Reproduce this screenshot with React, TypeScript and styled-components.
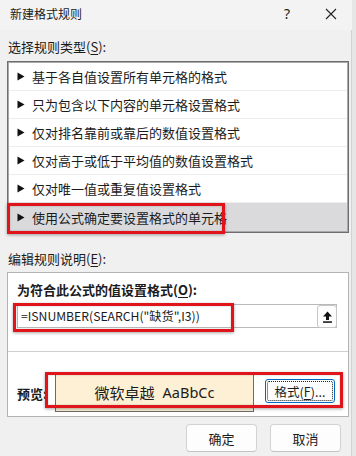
import React from "react";
import styled, { createGlobalStyle } from "styled-components";

const Global = createGlobalStyle`
  html, body { margin: 0; padding: 0; background: #f0f0f0; }
  body { font-family: "Noto Sans CJK SC", "Noto Sans", sans-serif; color: #1b1b1b; }
  * { box-sizing: border-box; }
`;

const Window = styled.div`
  width: 356px;
  height: 456px;
  background: #f0f0f0;
  overflow: hidden;
  display: flex;
  flex-direction: column;
  border-right: 4px solid #e6e6e6;
  box-shadow: inset -1px 0 0 #d2d2d2;
`;

const TitleBar = styled.div`
  height: 30px;
  flex: none;
  display: flex;
  align-items: center;
  padding-left: 10px;
  background: #f3f3f3;
`;

const Title = styled.div`
  font-size: 12px;
  line-height: 16px;
  flex: 1;
  margin-top: -3px;
`;

const TitleButton = styled.div<{ $w: number }>`
  width: ${(p) => p.$w}px;
  height: 30px;
  display: flex;
  align-items: center;
  justify-content: center;
  font-family: "Noto Sans", sans-serif;
  font-size: 14px;
  margin-top: -3px;
`;

const Body = styled.div`
  flex: 1;
  display: flex;
  flex-direction: column;
  padding: 8px 3px 0 7px;
`;

const Label = styled.div<{ $mt?: number }>`
  font-size: 13px;
  line-height: 18px;
  height: 18px;
  padding-left: 1px;
  margin-top: ${(p) => p.$mt ?? 0}px;
  u { text-decoration: underline; text-underline-offset: 2px; }
`;

const ListBox = styled.div`
  margin-top: 5px;
  height: 172px;
  background: #fff;
  border: 1px solid #6e6e6e;
  box-shadow: inset 1px 1px 0 #a8a8a8, inset -1px -1px 0 #a8a8a8;
  padding: 1px;
  display: flex;
  flex-direction: column;
`;

const Row = styled.div<{ $selected?: boolean }>`
  position: relative;
  height: 28px;
  flex: none;
  display: flex;
  align-items: center;
  padding-left: 8px;
  gap: 7px;
  font-size: 13px;
  background: ${(p) => (p.$selected ? "#dadadd" : "transparent")};
  border-bottom: ${(p) => (p.$selected ? "none" : "1px solid #ededed")};
`;

const Arrow = () => (
  <svg width="8" height="9" viewBox="0 0 8 9">
    <path d="M0.5 0.5 L7.5 4.5 L0.5 8.5 Z" fill="#111" />
  </svg>
);

const RedBox = styled.div<{ $l: number; $t: number; $w: number; $h: number }>`
  position: absolute;
  left: ${(p) => p.$l}px;
  top: ${(p) => p.$t}px;
  width: ${(p) => p.$w}px;
  height: ${(p) => p.$h}px;
  border: 3px solid #e0141b;
  box-shadow: 0 1px 3px rgba(0, 0, 0, 0.35), inset 0 0 2px rgba(0, 0, 0, 0.25);
  pointer-events: none;
`;

const Panel = styled.div`
  margin-top: 4px;
  height: 145px;
  background: #fff;
  border: 1px solid #b4b4b4;
  display: flex;
  flex-direction: column;
  padding-top: 8px;
`;

const BoldLabel = styled.div`
  font-size: 13px;
  font-weight: 700;
  line-height: 18px;
  padding-left: 9px;
  u { text-decoration: underline; text-underline-offset: 2px; }
`;

const FormulaInput = styled.div`
  position: relative;
  margin: 5px 11px 0 9px;
  height: 24px;
  border: 1px solid #b9b9b9;
  display: flex;
  align-items: center;
  padding-left: 3px;
  font-family: "Noto Sans CJK SC", sans-serif;
  font-size: 12.2px;
`;

const FormulaText = styled.span`
  flex: 1;
`;

const CollapseButton = styled.div`
  width: 20px;
  height: 23px;
  margin-right: -1px;
  margin-top: 1px;
  border: 1px solid #c6c6c6;
  border-radius: 3px;
  background: #fdfdfd;
  display: flex;
  align-items: center;
  justify-content: center;
`;

const Separator = styled.div`
  margin-top: 23px;
  height: 1px;
  background: #cfcfcf;
`;

const PreviewRow = styled.div`
  position: relative;
  margin-top: 22px;
  display: flex;
  align-items: center;
  padding-left: 9px;
`;

const PreviewLabel = styled.div`
  width: 38px;
  font-size: 13px;
  font-weight: 700;
  line-height: 18px;
  margin-top: 1px;
`;

const PreviewBox = styled.div`
  width: 199px;
  height: 38px;
  background: #fdf0d4;
  border: 1px solid #6b6b6b;
  display: flex;
  align-items: center;
  justify-content: center;
  font-size: 15px;
  padding-bottom: 2px;
`;

const Latin = styled.span`
  font-family: "Noto Sans", sans-serif;
  font-size: 14.5px;
  margin-left: 8px;
`;

const FormatButton = styled.div`
  margin-left: 11px;
  margin-bottom: 4px;
  width: 70px;
  height: 24px;
  border: 1px solid #0067c0;
  border-radius: 3px;
  background: #fdfdfd;
  padding: 1px;
  display: flex;
`;

const FocusRing = styled.div`
  flex: 1;
  border: 1px dotted #222;
  border-radius: 2px;
  display: flex;
  align-items: center;
  justify-content: center;
  font-size: 12.5px;
  u { text-decoration: underline; text-underline-offset: 2px; }
`;

const Footer = styled.div`
  margin-top: 7px;
  display: flex;
  justify-content: flex-end;
  gap: 13px;
  padding-right: 8px;
`;

const DialogButton = styled.div`
  width: 71px;
  height: 28px;
  background: #fdfdfd;
  border: 1px solid #d3d3d3;
  border-bottom-color: #c2c2c2;
  border-radius: 4px;
  display: flex;
  align-items: center;
  justify-content: center;
  font-size: 13px;
`;

const rules = [
  "基于各自值设置所有单元格的格式",
  "只为包含以下内容的单元格设置格式",
  "仅对排名靠前或靠后的数值设置格式",
  "仅对高于或低于平均值的数值设置格式",
  "仅对唯一值或重复值设置格式",
  "使用公式确定要设置格式的单元格",
];

export default function App() {
  return (
    <>
      <Global />
      <Window>
        <TitleBar>
          <Title>新建格式规则</Title>
          <TitleButton $w={46}>?</TitleButton>
          <TitleButton $w={42}>
            <svg width="12" height="12" viewBox="0 0 12 12">
              <path d="M1 1 L11 11 M11 1 L1 11" stroke="#222" strokeWidth="1.1" />
            </svg>
          </TitleButton>
        </TitleBar>
        <Body>
          <Label>
            选择规则类型(<u>S</u>):
          </Label>
          <ListBox>
            {rules.map((r, i) => (
              <Row key={r} $selected={i === rules.length - 1}>
                <Arrow />
                <span>{r}</span>
                {i === rules.length - 1 && <RedBox $l={-2} $t={0} $w={218} $h={31} />}
              </Row>
            ))}
          </ListBox>
          <Label $mt={17}>
            编辑规则说明(<u>E</u>):
          </Label>
          <Panel>
            <BoldLabel>
              为符合此公式的值设置格式(<u>O</u>):
            </BoldLabel>
            <FormulaInput>
              <FormulaText>=ISNUMBER(SEARCH("缺货",I3))</FormulaText>
              <CollapseButton>
                <svg width="11" height="12" viewBox="0 0 11 12">
                  <path d="M5.5 0.5 L10 5.5 L7 5.5 L7 9 L4 9 L4 5.5 L1 5.5 Z" fill="#111" />
                  <rect x="1" y="10.3" width="9" height="1.5" fill="#111" />
                </svg>
              </CollapseButton>
              <RedBox $l={-5} $t={-2} $w={221} $h={29} />
            </FormulaInput>
            <Separator />
            <PreviewRow>
              <PreviewLabel>预览:</PreviewLabel>
              <PreviewBox>
                微软卓越<Latin>AaBbCc</Latin>
              </PreviewBox>
              <FormatButton>
                <FocusRing>
                  格式(<u>F</u>)...
                </FocusRing>
              </FormatButton>
              <RedBox $l={37} $t={-2} $w={298} $h={36} />
            </PreviewRow>
          </Panel>
          <Footer>
            <DialogButton>确定</DialogButton>
            <DialogButton>取消</DialogButton>
          </Footer>
        </Body>
      </Window>
    </>
  );
}
